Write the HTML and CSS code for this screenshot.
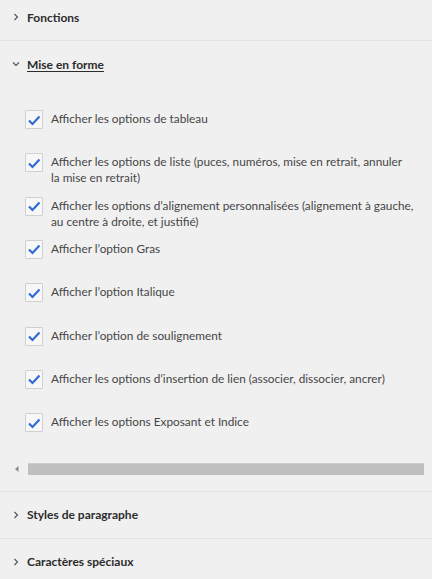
FILE: index.html
```html
<!DOCTYPE html>
<html lang="fr">
<head>
<meta charset="utf-8">
<link rel="stylesheet" href="styles.css">
</head>
<body>
<div class="panel">
  <section class="acc">
    <div class="acc-head">
      <svg class="chev" width="10" height="10" viewBox="0 0 10 10"><path d="M3.5 2 L6.5 5 L3.5 8" fill="none" stroke="#505050" stroke-width="1.1"/></svg>
      <span class="acc-title">Fonctions</span>
    </div>
  </section>
  <section class="acc open">
    <div class="acc-head">
      <svg class="chev" width="10" height="10" viewBox="0 0 10 10"><path d="M2 3.5 L5 6.5 L8 3.5" fill="none" stroke="#505050" stroke-width="1.1"/></svg>
      <span class="acc-title underline">Mise en forme</span>
    </div>
    <div class="acc-body">
      <ul class="opts">
        <li class="opt"><span class="cb"><svg width="14" height="12" viewBox="0 0 14 12"><path d="M2 6.5 L5.5 10 L12.5 2.5" fill="none" stroke="#2f6bd6" stroke-width="2.2"/></svg></span><span class="lbl">Afficher les options de tableau</span></li>
        <li class="opt"><span class="cb"><svg width="14" height="12" viewBox="0 0 14 12"><path d="M2 6.5 L5.5 10 L12.5 2.5" fill="none" stroke="#2f6bd6" stroke-width="2.2"/></svg></span><span class="lbl">Afficher les options de liste (puces, numéros, mise en retrait, annuler<br>la mise en retrait)</span></li>
        <li class="opt"><span class="cb"><svg width="14" height="12" viewBox="0 0 14 12"><path d="M2 6.5 L5.5 10 L12.5 2.5" fill="none" stroke="#2f6bd6" stroke-width="2.2"/></svg></span><span class="lbl">Afficher les options d’alignement personnalisées (alignement à gauche,<br>au centre à droite, et justifié)</span></li>
        <li class="opt"><span class="cb"><svg width="14" height="12" viewBox="0 0 14 12"><path d="M2 6.5 L5.5 10 L12.5 2.5" fill="none" stroke="#2f6bd6" stroke-width="2.2"/></svg></span><span class="lbl">Afficher l’option Gras</span></li>
        <li class="opt"><span class="cb"><svg width="14" height="12" viewBox="0 0 14 12"><path d="M2 6.5 L5.5 10 L12.5 2.5" fill="none" stroke="#2f6bd6" stroke-width="2.2"/></svg></span><span class="lbl">Afficher l’option Italique</span></li>
        <li class="opt"><span class="cb"><svg width="14" height="12" viewBox="0 0 14 12"><path d="M2 6.5 L5.5 10 L12.5 2.5" fill="none" stroke="#2f6bd6" stroke-width="2.2"/></svg></span><span class="lbl">Afficher l’option de soulignement</span></li>
        <li class="opt"><span class="cb"><svg width="14" height="12" viewBox="0 0 14 12"><path d="M2 6.5 L5.5 10 L12.5 2.5" fill="none" stroke="#2f6bd6" stroke-width="2.2"/></svg></span><span class="lbl">Afficher les options d’insertion de lien (associer, dissocier, ancrer)</span></li>
        <li class="opt"><span class="cb"><svg width="14" height="12" viewBox="0 0 14 12"><path d="M2 6.5 L5.5 10 L12.5 2.5" fill="none" stroke="#2f6bd6" stroke-width="2.2"/></svg></span><span class="lbl">Afficher les options Exposant et Indice</span></li>
      </ul>
      <div class="hscroll">
        <svg class="arrow" width="6" height="8" viewBox="0 0 6 8"><path d="M4.5 1 L1 4 L4.5 7 Z" fill="#8a8a8a"/></svg>
        <div class="thumb"></div>
      </div>
    </div>
  </section>
  <section class="acc">
    <div class="acc-head">
      <svg class="chev" width="10" height="10" viewBox="0 0 10 10"><path d="M3.5 2 L6.5 5 L3.5 8" fill="none" stroke="#505050" stroke-width="1.1"/></svg>
      <span class="acc-title">Styles de paragraphe</span>
    </div>
  </section>
  <section class="acc last">
    <div class="acc-head">
      <svg class="chev" width="10" height="10" viewBox="0 0 10 10"><path d="M3.5 2 L6.5 5 L3.5 8" fill="none" stroke="#505050" stroke-width="1.1"/></svg>
      <span class="acc-title">Caractères spéciaux</span>
    </div>
  </section>
</div>
</body>
</html>
```

FILE: styles.css
```css
html, body {
  margin: 0;
  padding: 0;
  background: #f0f0f0;
}
body {
  font-family: Lato, "Open Sans", sans-serif;
  width: 432px;
  height: 579px;
  overflow: hidden;
}
.panel {
  display: flex;
  flex-direction: column;
  margin-top: -6px;
}
.acc {
  border-bottom: 1px solid #e3e3e3;
}
.acc.last {
  border-bottom: none;
}
.acc-head {
  display: flex;
  align-items: center;
  height: 46px;
  padding-left: 11px;
  gap: 6px;
}
.chev {
  flex: none;
}
.acc-title {
  font-weight: 700;
  font-size: 12px;
  color: #2c2c2c;
}
.underline {
  text-decoration: underline;
  text-underline-offset: 2px;
}
.acc-body {
  padding: 24px 8px 16px 25px;
}
.opts {
  list-style: none;
  margin: 0;
  padding: 0;
}
.opt {
  display: flex;
  align-items: flex-start;
  gap: 8px;
  height: 43.33px;
}
.cb {
  flex: none;
  width: 16px;
  height: 17px;
  border: 1px solid #d0d0d0;
  background: #f7f7f7;
  border-radius: 1px;
  display: flex;
  align-items: center;
  justify-content: center;
  margin-top: -1px;
}
.lbl {
  font-size: 11.8px;
  line-height: 16px;
  color: #464646;
  white-space: nowrap;
}
.hscroll {
  display: flex;
  align-items: center;
  gap: 8px;
  height: 12px;
  margin-top: 5px;
  margin-left: -11px;
}
.arrow { flex: none; }
.thumb {
  flex: 1;
  height: 11px;
  background: #bfbfbf;
  border-top: 1px solid #cdcdcd;
}
```
